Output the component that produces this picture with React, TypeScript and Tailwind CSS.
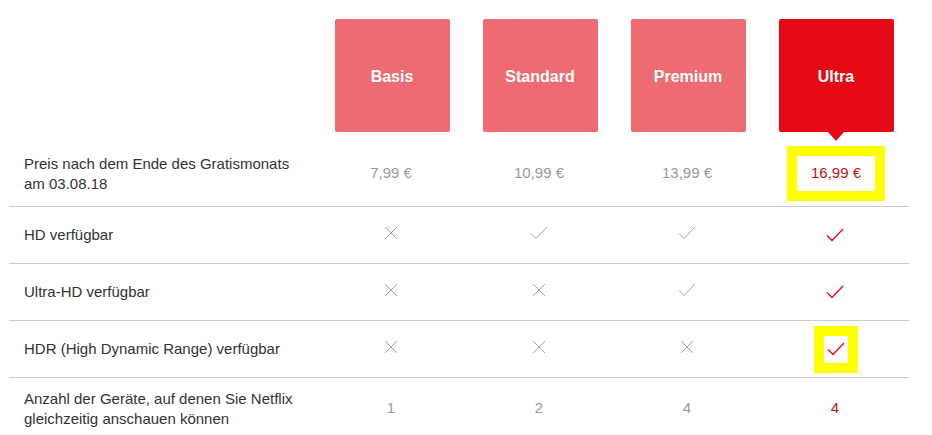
import type { ReactNode } from 'react'

const plans = ['Basis', 'Standard', 'Premium', 'Ultra']

function Cross() {
  return (
    <svg width="14" height="14" viewBox="0 0 14 14" className="-mt-[5px]">
      <path d="M1 1 L13 13 M13 1 L1 13" stroke="#a3a3a3" strokeWidth="1" fill="none" />
    </svg>
  )
}

function Check({ red = false }: { red?: boolean }) {
  return (
    <svg width="18" height="14" viewBox="0 0 18 14" className={red ? '' : '-mt-[4px]'}>
      <path
        d="M1 7.5 L6 12.5 L17 1"
        stroke={red ? '#e50914' : '#a3a3a3'}
        strokeWidth={red ? 1.3 : 1}
        fill="none"
      />
    </svg>
  )
}

function Row({
  label,
  cells,
  first = false,
  last = false,
}: {
  label: ReactNode
  cells: ReactNode[]
  first?: boolean
  last?: boolean
}) {
  return (
    <div
      className={`grid grid-cols-[308px_repeat(4,148px)] items-center ${
        first ? 'h-[65px]' : last ? 'h-[62px] border-t border-[#cccccc]' : 'h-[57px] border-t border-[#cccccc]'
      }`}
    >
      <div className="pl-[15px] text-[15px] leading-[20px] text-[#333333]">{label}</div>
      {cells.map((c, i) => (
        <div key={i} className="flex items-center justify-center text-[15px] text-[#999999]">
          {c}
        </div>
      ))}
    </div>
  )
}

export default function App() {
  return (
    <div className="h-[435px] w-[932px] overflow-hidden bg-white font-['Liberation_Sans',Arial,sans-serif]">
      <div className="ml-[9px] w-[900px]">
        <div className="grid h-[141px] grid-cols-[308px_repeat(4,148px)]">
          <div />
          {plans.map((p) => {
            const ultra = p === 'Ultra'
            return (
              <div key={p} className="flex flex-col items-center pl-[2px] pt-[19px]">
                <div
                  className={`flex h-[113px] w-[115px] items-center justify-center rounded-[2px] pt-[2px] text-[16px] font-bold text-white ${
                    ultra ? 'bg-[#e50914]' : 'bg-[#ee6b72]'
                  }`}
                >
                  {p}
                </div>
                {ultra && (
                  <div className="h-0 w-0 border-x-[8px] border-t-[9px] border-x-transparent border-t-[#e50914]" />
                )}
              </div>
            )
          })}
        </div>

        <Row
          first
          label={
            <>
              Preis nach dem Ende des Gratismonats
              <br />
              am 03.08.18
            </>
          }
          cells={[
            '7,99 €',
            '10,99 €',
            '13,99 €',
            <div className="ml-[2px] border-[10px] border-[#ffff00] bg-white px-[14px] py-[6px] text-[#c11119]">16,99 €</div>,
          ]}
        />
        <Row label="HD verfügbar" cells={[<Cross />, <Check />, <Check />, <Check red />]} />
        <Row label="Ultra-HD verfügbar" cells={[<Cross />, <Cross />, <Check />, <Check red />]} />
        <Row
          label="HDR (High Dynamic Range) verfügbar"
          cells={[
            <Cross />,
            <Cross />,
            <Cross />,
            <div className="ml-[2px] flex h-[47px] w-[44px] items-center justify-center border-[10px] border-[#ffff00] bg-white">
              <Check red />
            </div>,
          ]}
        />
        <Row
          last
          label={
            <>
              Anzahl der Geräte, auf denen Sie Netflix
              <br />
              gleichzeitig anschauen können
            </>
          }
          cells={['1', '2', '4', <span className="text-[#c11119]">4</span>]}
        />
      </div>
    </div>
  )
}
